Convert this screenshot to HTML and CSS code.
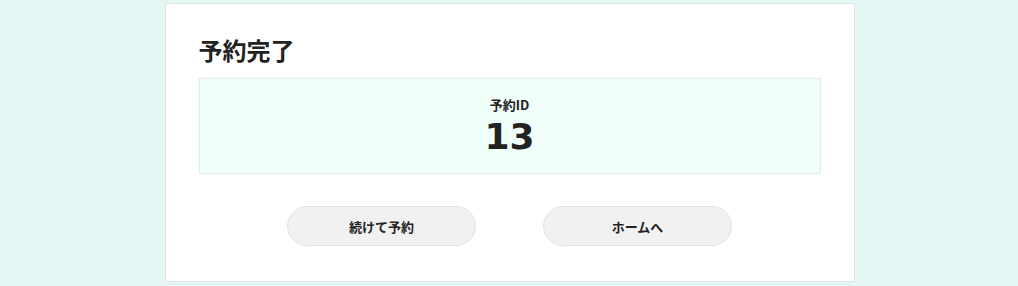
FILE: index.html
```html
<!DOCTYPE html>
<html lang="ja">
<head>
<meta charset="utf-8">
<link rel="stylesheet" href="styles.css">
</head>
<body>
<main class="card">
  <h1 class="title">予約完了</h1>
  <section class="idbox">
    <div class="idlabel">予約ID</div>
    <div class="idvalue">13</div>
  </section>
  <div class="actions">
    <button class="btn">続けて予約</button>
    <button class="btn">ホームへ</button>
  </div>
</main>
</body>
</html>
```
FILE: styles.css
```css
html, body {
  margin: 0;
  padding: 0;
  background: #e3f7f4;
  font-family: "DejaVu Sans", "Noto Sans CJK JP", sans-serif;
  color: #222;
}
body {
  padding-left: 1px;
}
.card {
  box-sizing: border-box;
  width: 690px;
  height: 279px;
  margin: 3px auto 0;
  background: #fff;
  border: 1px solid #e2e2e2;
  padding: 28px 33px 0;
}
.title {
  margin: 0 0 10px;
  font-size: 24px;
  line-height: 36px;
  font-weight: bold;
  font-family: "Noto Sans CJK JP", sans-serif;
  color: #222;
}
.idbox {
  box-sizing: border-box;
  height: 96px;
  background: #f0fffa;
  border: 1px solid #e4ece9;
  display: flex;
  flex-direction: column;
  align-items: center;
  padding-top: 16px;
}
.idlabel {
  font-size: 13px;
  line-height: 20px;
  font-weight: bold;
  font-family: "Noto Sans CJK JP", sans-serif;
}
.idvalue {
  margin-top: 2px;
  font-size: 36px;
  line-height: 40px;
  font-weight: bold;
  font-family: "DejaVu Sans", sans-serif;
}
.actions {
  display: flex;
  justify-content: center;
  gap: 67px;
  margin-top: 32px;
}
.btn {
  width: 189px;
  height: 40px;
  border-radius: 20px;
  background: #f1f1f1;
  border: 1px solid #e3e3e3;
  font-family: "Noto Sans CJK JP", sans-serif;
  font-size: 13px;
  font-weight: bold;
  color: #222;
  padding: 0;
}
```
